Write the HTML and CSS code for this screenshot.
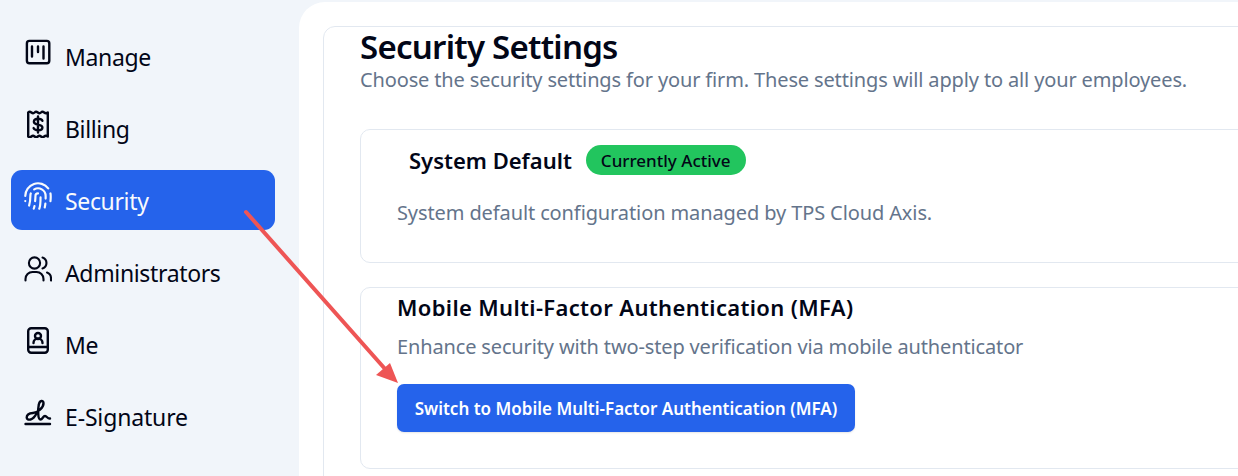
FILE: index.html
```html
<!DOCTYPE html>
<html lang="en">
    <head>
        <meta charset="UTF-8">
        <meta name="viewport" content="width=device-width, initial-scale=1.0">
        <title>Security Settings</title>
        <link rel="stylesheet" href="styles.css">
    </head>
    <body>
        <div class="app">
            <!-- Sidebar -->
            <nav class="sidebar">
                <a class="nav-item" href="#">
                    <svg class="nav-icon" viewBox="0 0 28 28">
                        <rect x="2.9" y="2.9" width="22.4" height="22.4" rx="2.5"/>
                        <path d="M8 8.5V18.5M14 8.5V14M19.5 8.5V20.5"/>
                    </svg>
                    <span>Manage</span>
                </a>
                <a class="nav-item" href="#">
                    <svg class="nav-icon" viewBox="0 0 28 28">
                        <path d="M4.2 2.5V26.5q1.6 1.4 3.2 0t3.2 0t3.2 0t3.2 0t3.2 0t3.6 0V2.5q-1.8 1.4-3.6 0t-3.2 0t-3.2 0t-3.2 0t-3.2 0t-3.2 0"/>
                        <path d="M18.4 10.8C17.8 9.4 16.2 8.8 14 8.8C11.5 8.8 9.9 9.9 9.9 11.7C9.9 15.7 18.4 13.5 18.4 17.4C18.4 19.2 16.6 20.2 14 20.2C11.7 20.2 10.2 19.5 9.6 18.1M14 6.5V22.5"/>
                    </svg>
                    <span>Billing</span>
                </a>
                <a class="nav-item active" href="#">
                    <svg class="nav-icon" viewBox="1 1 22 22">
                        <path class="thin" d="M12 10a2 2 0 0 0-2 2c0 1.02-.1 2.51-.26 4"/>
                        <path class="thin" d="M14 13.12c0 2.38 0 6.38-1 8.88"/>
                        <path class="thin" d="M17.29 21.02c.12-.6.43-2.3.5-3.02"/>
                        <path class="thin" d="M2 12a10 10 0 0 1 18-6"/>
                        <path class="thin" d="M2 16h.01"/>
                        <path class="thin" d="M21.8 16c.2-2 .131-5.354 0-6"/>
                        <path class="thin" d="M5 19.5C5.5 18 6 15 6 12a6 6 0 0 1 .34-2"/>
                        <path class="thin" d="M8.65 22c.21-.66.45-1.32.57-2"/>
                        <path class="thin" d="M9 6.8a6 6 0 0 1 9 5.2v2"/>
                    </svg>
                    <span>Security</span>
                </a>
                <a class="nav-item" href="#">
                    <svg class="nav-icon slim" viewBox="0 0 28 28">
                        <circle cx="10.5" cy="9" r="5.6"/>
                        <path d="M1.5 26.5V25a7 7 0 0 1 7-7h4a7 7 0 0 1 7 7v1.5"/>
                        <path d="M18.5 3.5a5.8 5.8 0 0 1 0 11"/>
                        <path d="M23 18.5a6 6 0 0 1 4 5.7v2.3"/>
                    </svg>
                    <span>Administrators</span>
                </a>
                <a class="nav-item" href="#">
                    <svg class="nav-icon" viewBox="0 0 28 28">
                        <rect x="4.2" y="2.2" width="19.6" height="24.6" rx="3"/>
                        <path d="M4.2 21H23.8"/>
                        <circle cx="14" cy="10" r="3"/>
                        <path d="M9.5 17a4.5 4.5 0 0 1 9 0"/>
                    </svg>
                    <span>Me</span>
                </a>
                <a class="nav-item" href="#">
                    <svg class="nav-icon" viewBox="0 0 28 28">
                        <path d="M2.7 19.5C2.7 16.5 6 15.2 9 15C13.5 14.7 19.8 9.5 19.5 5C19.3 2.2 15.8 2 14.8 6.5C14 10.5 13.5 21.5 16.5 21.5C18.5 21.5 19 18 21 18C23 18 23.5 21 26 20.5M2.7 19.5C2.7 21.3 4.5 22 6.5 21.5C9 20.8 11 18.5 12.5 15.5"/>
                        <path d="M1.5 26H26"/>
                    </svg>
                    <span class="wide">E-Signature</span>
                </a>
            </nav>

            <!-- Main Panel -->
            <main class="main">
                <div class="panel">
                    <h1 class="page-title">Security Settings</h1>
                    <p class="page-sub">Choose the security settings for your firm. These settings will apply to all your employees.</p>

                    <section class="card card-default">
                        <div class="card-head">
                            <h2 class="card-title">System Default</h2>
                            <span class="badge">Currently Active</span>
                        </div>
                        <p class="card-text">System default configuration managed by TPS Cloud Axis.</p>
                    </section>

                    <section class="card card-mfa">
                        <h2 class="card-title">Mobile Multi-Factor Authentication (MFA)</h2>
                        <p class="card-text">Enhance security with two-step verification via mobile authenticator</p>
                        <button class="switch-button">Switch to Mobile Multi-Factor Authentication (MFA)</button>
                    </section>
                </div>
            </main>
        </div>

        <!-- Annotation arrow -->
        <svg class="arrow" viewBox="0 0 1238 476">
            <path class="arrow-line" d="M246 212L386 370"/>
            <path class="arrow-head" d="M398 383L376 375L390 363Z"/>
        </svg>
    </body>
</html>
```

FILE: styles.css
```css
* {
  box-sizing: border-box;
}

body {
  margin: 0;
  height: 476px;
  overflow: hidden;
  background-color: #F1F5FA;
  color: #020617;
  font-family: "Noto Sans", sans-serif;
}

.app {
  display: flex;
  height: 476px;
}

/* Sidebar */
.sidebar {
  width: 299px;
  flex-shrink: 0;
  display: flex;
  flex-direction: column;
  gap: 12px;
  padding: 26px 24px 0 11px;
}

.nav-item {
  height: 60px;
  display: flex;
  align-items: center;
  gap: 13px;
  padding-left: 13px;
  border-radius: 11px;
  color: #020617;
  font-size: 23px;
  letter-spacing: -0.35px;
  text-decoration: none;
}

.nav-item span {
  margin-top: 2px;
}

.nav-item .wide {
  letter-spacing: -0.15px;
}

.nav-item.active {
  background-color: #2563EB;
  color: #F8FAFC;
}

.nav-icon {
  width: 28px;
  height: 28px;
  flex-shrink: 0;
  align-self: flex-start;
  margin-top: 12px;
  fill: none;
  stroke: currentColor;
  stroke-width: 2.4;
  stroke-linecap: round;
  stroke-linejoin: round;
}

.nav-icon.slim {
  stroke-width: 2.1;
}

.nav-icon .thin {
  stroke-width: 1.7;
}

/* Main Panel */
.main {
  flex: 1;
  margin-top: 2px;
  padding: 24px 0 0 24px;
  background-color: white;
  border-top-left-radius: 26px;
  overflow: hidden;
}

.panel {
  width: 1000px;
  height: 500px;
  padding: 0 36px;
  border: 1px solid #E2E8F0;
  border-radius: 12px;
}

.page-title {
  margin: 0;
  font-size: 33px;
  line-height: 40px;
  font-weight: 600;
  letter-spacing: -0.75px;
}

.page-sub {
  margin: 0;
  color: #64748B;
  font-size: 20px;
  line-height: 26px;
  letter-spacing: -0.14px;
}

/* Cards */
.card {
  width: 960px;
  border: 1px solid #E2E8F0;
  border-radius: 10px;
  padding: 0 36px;
}

.card-default {
  height: 134px;
  margin-top: 36px;
  margin-bottom: 24px;
}

.card-mfa {
  height: 182px;
}

.card-head {
  display: flex;
  align-items: center;
  gap: 14px;
  padding: 15px 0 0 12px;
}

.card-title {
  margin: 0;
  font-size: 22px;
  line-height: 30px;
  font-weight: 600;
}

.card-mfa .card-title {
  padding-top: 4px;
  letter-spacing: 0.35px;
}

.card-text {
  margin: 0;
  color: #64748B;
  font-size: 20px;
  line-height: 28px;
}

.card-default .card-text {
  margin-top: 24px;
  letter-spacing: -0.11px;
}

.card-mfa .card-text {
  margin-top: 11px;
  letter-spacing: -0.145px;
}

.badge {
  height: 30px;
  padding: 0 15px;
  display: flex;
  align-items: center;
  border-radius: 15px;
  background-color: #22C55E;
  color: #020617;
  font-size: 17px;
  font-weight: 500;
}

.switch-button {
  display: block;
  width: 458px;
  height: 48px;
  margin-top: 23px;
  border: none;
  border-radius: 7px;
  background-color: #2563EB;
  color: white;
  font-family: inherit;
  font-size: 17px;
  font-weight: 600;
  box-shadow: 0px 1px 2px rgba(0, 0, 0, 0.1);
}

/* Annotation */
.arrow {
  position: absolute;
  top: 0;
  left: 0;
  width: 1238px;
  height: 476px;
  pointer-events: none;
}

.arrow-line {
  fill: none;
  stroke: #EE5555;
  stroke-width: 4;
  stroke-linecap: round;
}

.arrow-head {
  fill: #EE5555;
}
```
